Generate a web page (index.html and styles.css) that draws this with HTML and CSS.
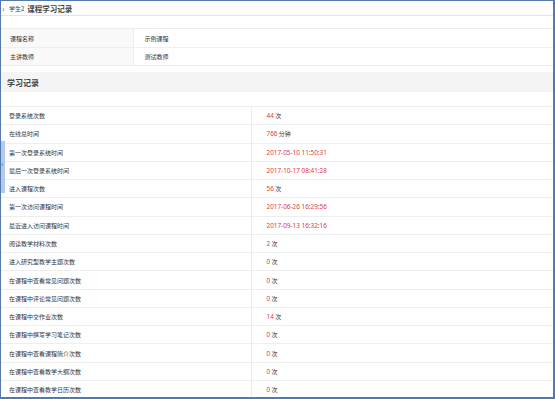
FILE: index.html
```html
<!DOCTYPE html>
<html lang="zh-CN">
<head>
    <meta charset="UTF-8">
    <title>课程学习记录</title>
<link rel="stylesheet" href="styles.css">
</head>
<body>
    <div class="frame">
        <div class="crumb">
            <span class="arrow">›</span>
            <span class="who">学生2</span>
            <span class="title">课程学习记录</span>
        </div>

        <table class="info">
            <tr class="r1"><td class="label">课程名称</td><td class="value">示例课程</td></tr>
            <tr class="r2"><td class="label">主讲教师</td><td class="value">测试教师</td></tr>
        </table>

        <div class="section">学习记录</div>

        <table class="record">
            <tr><td class="label">登录系统次数</td><td class="value"><em>44</em> 次</td></tr>
            <tr><td class="label">在线总时间</td><td class="value"><em>766</em> 分钟</td></tr>
            <tr><td class="label">第一次登录系统时间</td><td class="value"><em>2017-05-10 11:50:31</em></td></tr>
            <tr><td class="label">最后一次登录系统时间</td><td class="value"><em>2017-10-17 08:41:28</em></td></tr>
            <tr><td class="label">进入课程次数</td><td class="value"><em>56</em> 次</td></tr>
            <tr><td class="label">第一次访问课程时间</td><td class="value"><em>2017-06-26 16:29:56</em></td></tr>
            <tr><td class="label">最近进入访问课程时间</td><td class="value"><em>2017-09-13 16:32:16</em></td></tr>
            <tr><td class="label">阅读教学材料次数</td><td class="value"><em>2</em> 次</td></tr>
            <tr><td class="label">进入研究型教学主题次数</td><td class="value"><em>0</em> 次</td></tr>
            <tr><td class="label">在课程中查看常见问题次数</td><td class="value"><em>0</em> 次</td></tr>
            <tr><td class="label">在课程中评论常见问题次数</td><td class="value"><em>0</em> 次</td></tr>
            <tr><td class="label">在课程中交作业次数</td><td class="value"><em>14</em> 次</td></tr>
            <tr><td class="label">在课程中撰写学习笔记次数</td><td class="value"><em>0</em> 次</td></tr>
            <tr><td class="label">在课程中查看课程简介次数</td><td class="value"><em>0</em> 次</td></tr>
            <tr><td class="label">在课程中查看教学大纲次数</td><td class="value"><em>0</em> 次</td></tr>
            <tr><td class="label">在课程中查看教学日历次数</td><td class="value"><em>0</em> 次</td></tr>
        </table>

        <div class="handle">‹</div>
    </div>
</body>
</html>
```

FILE: styles.css
```css
* {
    margin: 0;
    padding: 0;
    box-sizing: border-box;
}
body {
    width: 555px;
    height: 399px;
    overflow: hidden;
    background: #fff;
    font-family: "Noto Sans CJK SC", "Noto Sans", sans-serif;
    color: #333;
}
.frame {
    position: relative;
    width: 555px;
    height: 399px;
    overflow: hidden;
    border: 2px solid #5579ad;
    border-top-width: 1px;
    border-left-width: 1px;
    background: #fff;
}
.crumb {
    display: flex;
    align-items: center;
    height: 15px;
    background: #fdfdfd;
    border-bottom: 1px solid #f1dede;
}
.crumb .arrow {
    width: 8px;
    padding-left: 1px;
    font-size: 8px;
    color: #555;
}
.crumb .who {
    font-size: 6px;
    color: #444;
}
.crumb .title {
    margin-left: 3px;
    font-size: 7.5px;
    font-weight: bold;
    color: #444;
}
table {
    width: 100%;
    border-collapse: collapse;
    font-size: 6px;
}
td {
    border-bottom: 1px solid #eeeeee;
    vertical-align: middle;
    white-space: nowrap;
}
.info {
    margin-top: 12px;
    border-top: 1px solid #ededed;
}
.info .r1 td {
    height: 19px;
}
.info .r2 td {
    height: 18px;
}
.info .label {
    width: 132px;
    padding-left: 9px;
    background: #f9f9f9;
    border-right: 1px solid #ececec;
}
.info .value {
    padding-left: 11px;
}
.section {
    margin-top: 6px;
    height: 20px;
    line-height: 21px;
    padding-left: 6px;
    background: #f4f4f4;
    font-size: 8px;
    font-weight: bold;
    color: #444;
}
.record {
    margin-top: 14px;
    border-top: 1px solid #eeeeee;
}
.record td {
    height: 18.27px;
}
.record .label {
    width: 250px;
    padding-left: 8px;
    border-right: 1px solid #ececec;
}
.record .value {
    padding-left: 15px;
}
.record em {
    font-style: normal;
    font-family: "Noto Sans", sans-serif;
    font-size: 6.4px;
    color: #e0393e;
}
.handle {
    position: absolute;
    left: 0;
    top: 140px;
    width: 4px;
    height: 52px;
    background: #b3cbea;
    font-size: 8px;
    line-height: 46px;
    color: #3e6aa8;
    overflow: visible;
}
```
